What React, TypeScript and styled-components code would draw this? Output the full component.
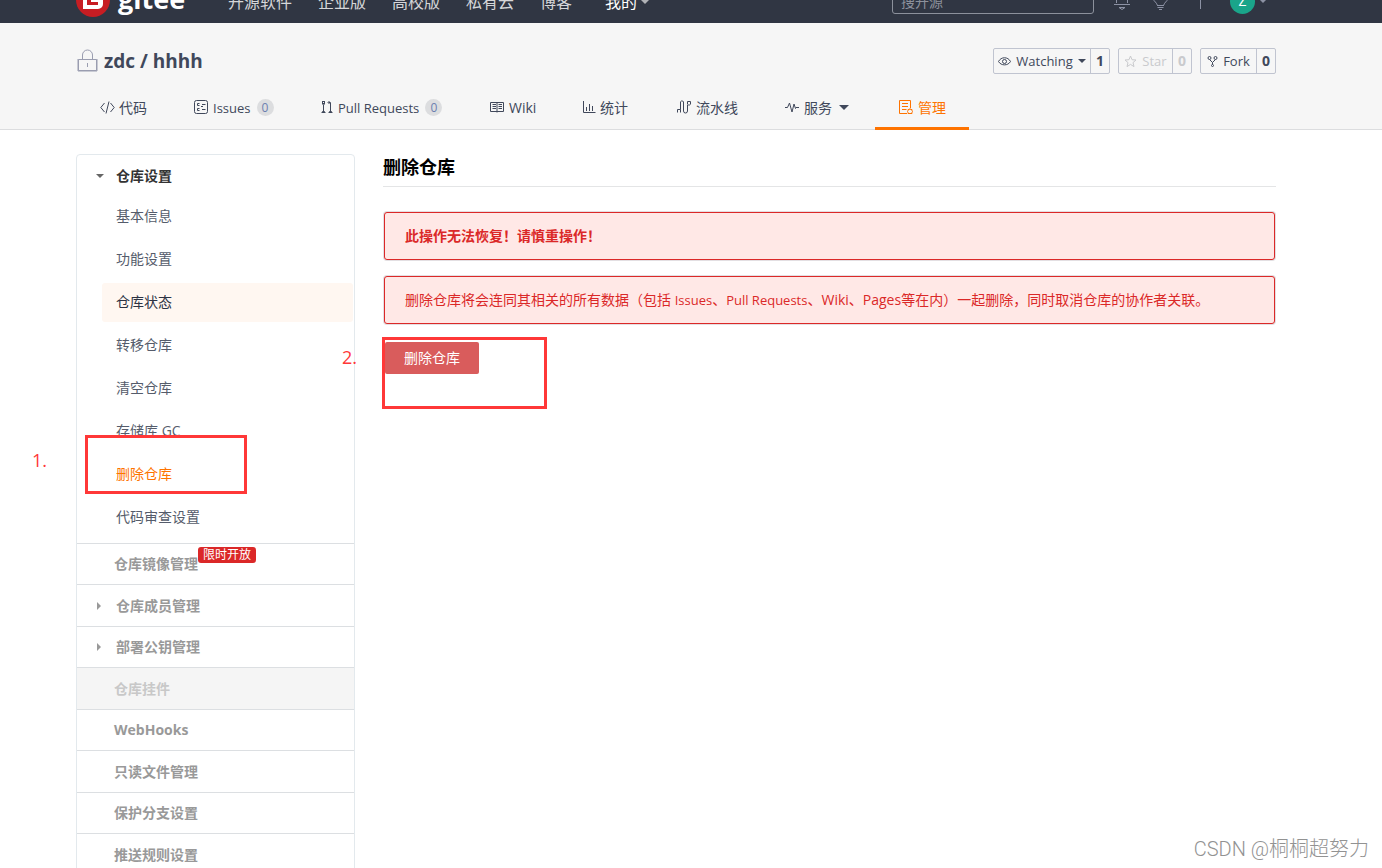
import React from 'react';
import styled, { createGlobalStyle, css } from 'styled-components';

const GlobalStyle = createGlobalStyle`
  * { box-sizing: border-box; }
  body {
    margin: 0;
    background: #fff;
    color: #40485b;
    font-family: "Open Sans", "Noto Sans CJK SC", sans-serif;
    font-size: 14px;
    line-height: 20px;
  }
  a { color: inherit; text-decoration: none; }
  button, input { font: inherit; color: inherit; }
  ul { list-style: none; margin: 0; padding: 0; }
`;

const Page = styled.div`
  position: relative;
  height: 100vh;
  overflow: hidden;
`;

const Container = styled.div`
  padding: 0 106px 0 76px;
`;

/* ---------- top bar ---------- */

const TopBar = styled.header`
  height: 23px;
  overflow: hidden;
  background: #303643;
  color: #d6d7d9;
`;

const TopBarRow = styled(Container)`
  display: flex;
  align-items: center;
  height: 44px;
  margin-top: -21px;
`;

const Brand = styled.a`
  display: flex;
  align-items: center;
  gap: 8px;
  width: 139px;
  padding-bottom: 3px;
  color: #fff;
  font-size: 27px;
  font-weight: 700;
  line-height: 34px;

  span { padding-bottom: 2px; }
`;

const TopNav = styled.nav`
  display: flex;
  flex: 1;
  padding-top: 1px;
  font-size: 16px;
`;

const TopLink = styled.a<{ $menu?: boolean }>`
  display: flex;
  align-items: center;
  gap: 3px;
  padding: 0 13px;
  ${(p) => p.$menu && css`
    padding-left: 20px;
    color: #fff;
  `}
`;

const SearchBox = styled.input`
  width: 202px;
  height: 32px;
  margin-bottom: 6px;
  padding: 6px 8px 0;
  border: 1px solid #8c919c;
  border-radius: 3px;
  background: transparent;
  font-size: 14px;

  &::placeholder { color: #8c919c; opacity: 1; }
`;

const TopTools = styled.div`
  display: flex;
  align-items: center;
  width: 182px;
  padding-left: 19px;
  color: #8c92a4;
`;

const ToolLink = styled.a`
  display: flex;
  margin-right: 21px;
  padding-bottom: 6px;
`;

const Divider = styled.span`
  width: 1px;
  height: 16px;
  margin: 0 29px 0 10px;
  background: #8c92a4;
`;

const Avatar = styled.a`
  display: flex;
  align-items: center;
  justify-content: center;
  width: 25px;
  height: 25px;
  margin-right: 4px;
  border-radius: 50%;
  background: #1aa58a;
  color: #fff;
`;

const Caret = styled.span<{ $right?: boolean; $size: number; $color?: string }>`
  width: 0;
  height: 0;
  border: ${(p) => p.$size}px solid transparent;
  ${(p) =>
    p.$right
      ? css`border-left-color: ${p.$color ?? 'currentColor'}; border-right-width: 0;`
      : css`border-top-color: ${p.$color ?? 'currentColor'}; border-bottom-width: 0;`}
`;

/* ---------- repository header ---------- */

const RepoHeader = styled.section`
  height: 107px;
  border-bottom: 1px solid #dcdddf;
  background: #f6f6f6;
`;

const TitleRow = styled.div`
  display: flex;
  align-items: center;
  justify-content: space-between;
  height: 76px;
`;

const RepoName = styled.h1`
  display: flex;
  align-items: center;
  gap: 5px;
  margin: 0;
  padding-left: 1px;
  font-size: 19px;
  line-height: 26px;

  svg { color: #9a9db0; }
`;

const Actions = styled.div`
  display: flex;
  gap: 8px;
`;

const ActionGroup = styled.div<{ $width: number; $muted?: boolean }>`
  display: flex;
  width: ${(p) => p.$width}px;
  height: 26px;
  border: 1px solid #c0c4d0;
  border-radius: 2px;
  color: ${(p) => (p.$muted ? '#c9cacd' : '#40485b')};
`;

const ActionButton = styled.button`
  display: flex;
  flex: 1;
  align-items: center;
  justify-content: center;
  gap: 5px;
  padding: 0;
  border: 0;
  background: transparent;
  font-size: 13px;
  white-space: nowrap;
`;

const ActionCount = styled.a`
  width: 19px;
  border-left: 1px solid #c0c4d0;
  line-height: 24px;
  font-weight: 700;
  text-align: center;
`;

const Tabs = styled.nav`
  display: flex;
  height: 31px;
`;

const Tab = styled.a<{ $width: number; $active?: boolean }>`
  display: flex;
  flex: 0 0 ${(p) => p.$width}px;
  align-items: center;
  gap: 4px;
  height: 31px;
  padding: 0 0 11px 24px;
  border-bottom: 3px solid ${(p) => (p.$active ? '#fe7300' : 'transparent')};
  color: ${(p) => (p.$active ? '#fe7300' : 'inherit')};
  white-space: nowrap;

  svg { flex: none; }
  > ${Caret} { margin-left: 3px; }
`;

const Term = styled.span`
  font-size: 13px;
`;

const CountBadge = styled.span`
  width: 17px;
  height: 17px;
  margin-left: 2px;
  border-radius: 50%;
  background: #dcdddf;
  color: #6c7fb0;
  font-size: 12px;
  line-height: 17px;
  text-align: center;
`;

/* ---------- body ---------- */

const Body = styled(Container)`
  display: flex;
  gap: 28px;
  padding-top: 24px;
`;

const Sidebar = styled.aside`
  flex: 0 0 279px;
  border: 1px solid #e3e9ed;
  border-radius: 4px;
`;

const GroupTitle = styled.button`
  display: flex;
  align-items: center;
  gap: 12px;
  width: 100%;
  height: 42px;
  padding: 0 0 0 19px;
  border: 0;
  background: transparent;
  color: #333;
  font-weight: 700;
`;

const SubList = styled.ul`
  display: grid;
  gap: 4px;
  padding: 0 1px 6px 25px;
`;

const SubLink = styled.a<{ $state?: string }>`
  display: block;
  height: 39px;
  padding-left: 14px;
  border-radius: 3px;
  line-height: 37px;
  background: ${(p) => (p.$state === 'hover' ? '#fff7f1' : 'transparent')};
  color: ${(p) => (p.$state === 'active' ? '#fe7300' : p.$state === 'hover' ? '#2c3243' : '#555c6b')};
`;

const MenuList = styled.ul`
  display: grid;
  grid-auto-rows: 41px 42px;
`;

const MenuItem = styled.li<{ $disabled?: boolean }>`
  display: flex;
  border-top: 1px solid #dcdfe2;
  background: ${(p) => (p.$disabled ? '#f5f5f5' : 'transparent')};
  color: ${(p) => (p.$disabled ? '#c8c8c8' : '#999')};
`;

const MenuLink = styled.a<{ $nested?: boolean }>`
  position: relative;
  display: flex;
  flex: 1;
  align-items: center;
  gap: 15px;
  padding-left: ${(p) => (p.$nested ? 20 : 37)}px;
  font-weight: 700;
`;

const Flag = styled.span`
  position: absolute;
  top: 3px;
  left: 121px;
  width: 58px;
  height: 16px;
  border-radius: 3px;
  background: #db2828;
  color: #fff;
  font-size: 12px;
  font-weight: 400;
  line-height: 16px;
  text-align: center;
`;

const Main = styled.main`
  flex: 1;
  min-width: 0;
`;

const Heading = styled.h2`
  margin: 0 0 25px;
  padding-bottom: 6px;
  border-bottom: 1px solid #e4e5e6;
  color: #000;
  font-size: 18px;
  line-height: 26px;
`;

const Alert = styled.p<{ $strong?: boolean }>`
  margin: 0 1px 16px;
  padding: 13px 20px;
  border: 1px solid #db2828;
  border-radius: 3px;
  box-shadow: 0 0 0 1px #e3dfe2;
  background: #ffe8e6;
  color: #db2828;
  font-weight: ${(p) => (p.$strong ? 700 : 400)};
`;

const DangerButton = styled.button`
  width: 94px;
  height: 32px;
  margin: 2px 0 0 2px;
  padding: 0;
  border: 0;
  border-radius: 2px;
  background: #d95c5c;
  color: #fff;
`;

/* ---------- annotations drawn over the page ---------- */

const Frame = styled.div<{ $x: number; $y: number; $w: number; $h: number }>`
  position: absolute;
  left: ${(p) => p.$x}px;
  top: ${(p) => p.$y}px;
  width: ${(p) => p.$w}px;
  height: ${(p) => p.$h}px;
  border: 3px solid #ff3838;
  pointer-events: none;
`;

const Step = styled.span<{ $x: number; $y: number }>`
  position: absolute;
  left: ${(p) => p.$x}px;
  top: ${(p) => p.$y}px;
  color: #ff3838;
  font-size: 18px;
  line-height: 24px;
`;

const Watermark = styled.span`
  position: absolute;
  right: 13px;
  bottom: 5px;
  color: #929292;
  font-family: Roboto, "Noto Sans CJK SC", sans-serif;
  font-size: 20px;
  font-weight: 300;
  line-height: 28px;
`;

/* ---------- icons ---------- */

type IconProps = { w?: number; h?: number; children: React.ReactNode };
const Icon = ({ w = 15, h = 15, children }: IconProps) => (
  <svg width={w} height={h} viewBox={`0 0 ${w} ${h}`} fill="none" stroke="currentColor" strokeWidth={1} aria-hidden="true">
    {children}
  </svg>
);

const icons = {
  code: <Icon><path d="M4.5 3L.8 7.5l3.700 4.500M10.500 3l3.700 4.500-3.700 4.500M9 1.500l-3 12" /></Icon>,
  issues: <Icon><rect x=".5" y=".5" width="13" height="13" rx="2" /><path d="M5.500 3.500h-2v2h2M5.500 8.500h-2v2h2M8 4.500h3.500M7 6.500h2M8 9.500h3.500" /></Icon>,
  pulls: <Icon w={13}><path d="M2.500 4.500v7M9.500 11V2.500h-2M8.500 1l-1.500 1.500L8.500 4" /><rect x="1.500" y="1.500" width="2" height="2.500" /><path d="M.5 12.500h4M7.500 12.500h4M1.500 12.500v-1h2v1M8.500 12.500v-1h2v1" /></Icon>,
  wiki: <Icon><path d="M.5 2.500h13v9H.5zM7 2.500v10M2.500 4.500H6M2.500 6.500H6M2.500 8.500H6M8.500 4.500h3.500M8.500 6.500h3.500M8.500 8.500h3.500" /></Icon>,
  stats: <Icon w={13}><path d="M.5 1v11.500H12.500M3.500 7v4M6.500 4v7M9.500 6v5" /></Icon>,
  flow: <Icon><path d="M3.500 9.500V3a1.500 1.500 0 0 1 3-1v9a1.500 1.500 0 0 0 4 0V5" /><path d="M.5 12.500v-3h3v3M10.500 1.500h3V4L12 5.500 10.500 4z" /></Icon>,
  pulse: <Icon><path d="M0 7.500h2.500l2-4.500 2.500 9 2-8 1.500 4.500.5-1H14" /></Icon>,
  manage: <Icon><path d="M8 13.500H.5V.5h11V8M3 3.500h6M3 6.500h6M3 9.500h4.500" /><path d="M10.500 9.500l.5-1 .5 1H13V11l.5.500-.5.500v1.500H9V12l-.5-.5.500-.5V9.500z" /></Icon>,
};

const tabs = [
  { label: '代码', icon: icons.code, width: 94 },
  { label: 'Issues', icon: icons.issues, width: 127, count: 0, term: true },
  { label: 'Pull Requests', icon: icons.pulls, width: 169, count: 0, term: true },
  { label: 'Wiki', icon: icons.wiki, width: 93 },
  { label: '统计', icon: icons.stats, width: 94 },
  { label: '流水线', icon: icons.flow, width: 108 },
  { label: '服务', icon: icons.pulse, width: 114, menu: true },
  { label: '管理', icon: icons.manage, width: 94, active: true },
];

const settings = [
  { label: '基本信息' },
  { label: '功能设置' },
  { label: '仓库状态', state: 'hover' },
  { label: '转移仓库' },
  { label: '清空仓库' },
  { label: '存储库 GC' },
  { label: '删除仓库', state: 'active' },
  { label: '代码审查设置' },
];

const menu = [
  { label: '仓库镜像管理', flag: '限时开放' },
  { label: '仓库成员管理', nested: true },
  { label: '部署公钥管理', nested: true },
  { label: '仓库挂件', disabled: true },
  { label: 'WebHooks' },
  { label: '只读文件管理' },
  { label: '保护分支设置' },
  { label: '推送规则设置' },
];

export default function App() {
  return (
    <Page>
      <GlobalStyle />
      <TopBar>
        <TopBarRow>
          <Brand href="#">
            <svg width="34" height="34" viewBox="0 0 34 34" aria-hidden="true">
              <circle cx="17" cy="17" r="17" fill="#c71d23" />
              <path d="M27 7H13a6 6 0 0 0-6 6v13h15a5 5 0 0 0 5-5v-6H15v4h7v3H11v-9a2 2 0 0 1 2-2h14z" fill="#fff" />
            </svg>
            <span>gitee</span>
          </Brand>
          <TopNav>
            {['开源软件', '企业版', '高校版', '私有云', '博客'].map((t) => (
              <TopLink key={t} href="#">{t}</TopLink>
            ))}
            <TopLink href="#" $menu>我的<Caret $size={5} $color="#b0b2b6" /></TopLink>
          </TopNav>
          <SearchBox type="search" placeholder="搜开源" aria-label="搜开源" />
          <TopTools>
            <ToolLink href="#" aria-label="通知">
              <Icon w={18} h={24}><path d="M3.500 17V8a5.500 5.500 0 0 1 11 0v9M1 18.500h16M6 21.500h6l-3 2z" /></Icon>
            </ToolLink>
            <ToolLink href="#" aria-label="动态">
              <Icon w={17} h={24}><path d="M5.500 19.500Q5 17.500 2 14.500a8 8 0 1 1 13 0Q12 17.500 11.500 19.500M5 19.500h7M5.500 21.500h6M7 23.500h3" /></Icon>
            </ToolLink>
            <Divider />
            <Avatar href="#">Z</Avatar>
            <Caret $size={4} />
          </TopTools>
        </TopBarRow>
      </TopBar>

      <RepoHeader>
        <Container>
          <TitleRow>
            <RepoName>
              <Icon w={22} h={24}><path d="M1.500 10.500h18v11h-18zM5.500 10V6a5 5 0 0 1 10 0v4M10.500 14v4" /><path d="M1 10v12h19V10" /></Icon>
              zdc / hhhh
            </RepoName>
            <Actions>
              <ActionGroup $width={117}>
                <ActionButton>
                  <Icon w={13} h={13}><path d="M.5 6.500C3 1.500 10 1.500 12.500 6.500 10 11 3 11 .5 6.500z" /><circle cx="6.500" cy="6.500" r="2" /></Icon>
                  Watching
                  <Caret $size={4} />
                </ActionButton>
                <ActionCount href="#">1</ActionCount>
              </ActionGroup>
              <ActionGroup $width={74} $muted>
                <ActionButton>
                  <Icon w={13} h={13}><path d="M6.500 1l1.500 3.700 4 .3-3 2.600 1 4-3.500-2.200L3 11.600l1-4L1 5l4-.3z" /></Icon>
                  Star
                </ActionButton>
                <ActionCount href="#">0</ActionCount>
              </ActionGroup>
              <ActionGroup $width={76}>
                <ActionButton>
                  <Icon w={11} h={13}><circle cx="2.500" cy="3" r="1.500" /><circle cx="8.500" cy="3" r="1.500" /><circle cx="5.500" cy="10.500" r="1" /><path d="M2.500 4.500l3 3 3-3M5.500 7.500v2" /></Icon>
                  Fork
                </ActionButton>
                <ActionCount href="#">0</ActionCount>
              </ActionGroup>
            </Actions>
          </TitleRow>
          <Tabs>
            {tabs.map((t) => (
              <Tab key={t.label} href="#" $width={t.width} $active={t.active}>
                {t.icon}
                {t.term ? <Term>{t.label}</Term> : t.label}
                {t.count !== undefined && <CountBadge>{t.count}</CountBadge>}
                {t.menu && <Caret $size={5} />}
              </Tab>
            ))}
          </Tabs>
        </Container>
      </RepoHeader>

      <Body>
        <Sidebar>
          <GroupTitle><Caret $size={4} $color="#666" />仓库设置</GroupTitle>
          <SubList>
            {settings.map((s) => (
              <li key={s.label}><SubLink href="#" $state={s.state}>{s.label}</SubLink></li>
            ))}
          </SubList>
          <MenuList>
            {menu.map((m) => (
              <MenuItem key={m.label} $disabled={m.disabled}>
                <MenuLink href="#" $nested={m.nested}>
                  {m.nested && <Caret $right $size={4} />}
                  {m.label}
                  {m.flag && <Flag>{m.flag}</Flag>}
                </MenuLink>
              </MenuItem>
            ))}
          </MenuList>
        </Sidebar>
        <Main>
          <Heading>删除仓库</Heading>
          <Alert $strong>此操作无法恢复！请慎重操作！</Alert>
          <Alert>
            删除仓库将会连同其相关的所有数据（包括 <Term>Issues</Term>、<Term>Pull Requests</Term>、Wiki、Pages等在内）一起删除，同时取消仓库的协作者关联。
          </Alert>
          <DangerButton>删除仓库</DangerButton>
        </Main>
      </Body>

      <Frame $x={85} $y={435} $w={162} $h={59} />
      <Frame $x={382} $y={337} $w={165} $h={72} />
      <Step $x={32} $y={448}>1.</Step>
      <Step $x={342} $y={345}>2.</Step>
      <Watermark>CSDN @桐桐超努力</Watermark>
    </Page>
  );
}
